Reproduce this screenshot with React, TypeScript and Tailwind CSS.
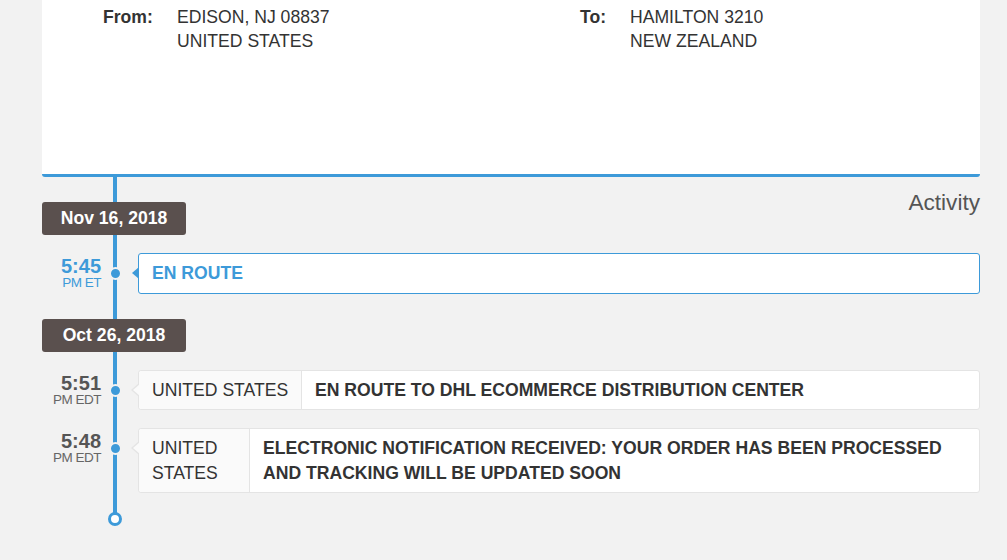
const BLUE = "#3d9ad9";

type Event = {
  time: string;
  zone: string;
  place?: string;
  placeWidth?: string;
  text: string;
  active?: boolean;
};

const groups: { date: string; events: Event[] }[] = [
  {
    date: "Nov 16, 2018",
    events: [{ time: "5:45", zone: "PM ET", text: "EN ROUTE", active: true }],
  },
  {
    date: "Oct 26, 2018",
    events: [
      {
        time: "5:51",
        zone: "PM EDT",
        place: "UNITED STATES",
        placeWidth: "w-[163px] whitespace-nowrap",
        text: "EN ROUTE TO DHL ECOMMERCE DISTRIBUTION CENTER",
      },
      {
        time: "5:48",
        zone: "PM EDT",
        place: "UNITED STATES",
        placeWidth: "w-[111px]",
        text: "ELECTRONIC NOTIFICATION RECEIVED: YOUR ORDER HAS BEEN PROCESSED AND TRACKING WILL BE UPDATED SOON",
      },
    ],
  },
];

const DateBadge = ({ date }: { date: string }) => (
  <div className="relative z-10 flex h-[33px] w-[144px] items-center justify-center rounded-[3px] bg-[#5a504e] text-[17.6px] font-bold text-white">
    {date}
  </div>
);

const Row = ({ ev }: { ev: Event }) => (
  <div className="flex items-start">
    <div className="mt-[3px] w-[59px] text-right">
      <div
        className={`text-[20px] font-bold leading-5 ${ev.active ? "text-[#3d9ad9]" : "text-[#555555]"}`}
      >
        {ev.time}
      </div>
      <div
        className={`text-[13.5px] leading-[13px] tracking-[-0.5px] ${ev.active ? "text-[#3d9ad9]" : "text-[#666666]"}`}
      >
        {ev.zone}
      </div>
    </div>
    <div className="relative z-10 ml-[8px] mt-[14px] h-[13px] w-[13px] rounded-full border-2 border-[#f2f2f2] bg-[#3d9ad9]" />
    <div
      className={`relative ml-[16px] flex flex-1 rounded-[3px] border bg-white ${ev.active ? "border-[#3d9ad9]" : "border-[#e4e4e4]"}`}
    >
      {ev.active ? (
        <span className="absolute left-[-7px] top-[13px] h-0 w-0 border-y-[6px] border-r-[7px] border-y-transparent border-r-[#3d9ad9]" />
      ) : (
        <>
          <span className="absolute left-[-8px] top-[12px] h-0 w-0 border-y-[7px] border-r-[8px] border-y-transparent border-r-[#e4e4e4]" />
          <span className="absolute left-[-6px] top-[13px] h-0 w-0 border-y-[6px] border-r-[7px] border-y-transparent border-r-[#fafafa]" />
        </>
      )}
      {ev.place && (
        <div
          className={`${ev.placeWidth} shrink-0 rounded-l-[3px] border-r border-[#e4e4e4] bg-[#fafafa] px-[13px] py-[7px] text-[17.6px] leading-[24.5px] text-[#333333]`}
        >
          {ev.place}
        </div>
      )}
      <div
        className={`flex-1 px-[13px] py-[7px] text-[17.6px] font-bold leading-[24.5px] ${ev.active ? "text-[#3d9ad9]" : "text-[#333333]"}`}
      >
        {ev.text}
      </div>
    </div>
  </div>
);

export default function App() {
  return (
    <div className="min-h-[560px] w-full bg-[#f2f2f2] font-['Liberation_Sans',Arial,sans-serif] text-[#333333]">
      <div className="ml-[42px] h-[177px] w-[938px] rounded-b-[3px] border-b-[3px] border-[#3d9ad9] bg-white">
        <div className="flex pl-[61px] pt-[5px] text-[17.6px] leading-6">
          <div className="flex w-[477px]">
            <div className="w-[74px] font-bold">From:</div>
            <div>
              <div>EDISON, NJ 08837</div>
              <div>UNITED STATES</div>
            </div>
          </div>
          <div className="flex">
            <div className="w-[50px] font-bold">To:</div>
            <div>
              <div>HAMILTON 3210</div>
              <div>NEW ZEALAND</div>
            </div>
          </div>
        </div>
      </div>

      <div className="relative ml-[42px] w-[938px] pt-[12px] pb-[35px]">
        <div className="absolute left-[71px] top-0 bottom-[48px] w-[4px] bg-[#3d9ad9]" />
        {groups.map((g, gi) => (
          <div key={g.date} className={gi === 0 ? "" : "mt-[25px]"}>
            <div className="flex items-start justify-between">
              <div className={gi === 0 ? "mt-[13px]" : ""}>
                <DateBadge date={g.date} />
              </div>
              {gi === 0 && (
                <div className="text-[22.6px] leading-[28px] text-[#555555]">Activity</div>
              )}
            </div>
            <div className="mt-[18px] flex flex-col gap-[18px]">
              {g.events.map((ev) => (
                <Row key={ev.time} ev={ev} />
              ))}
            </div>
          </div>
        ))}
        <div
          className="relative z-10 ml-[66px] mt-[19px] h-[14px] w-[14px] rounded-full border-[3px] bg-white"
          style={{ borderColor: BLUE }}
        />
      </div>
    </div>
  );
}
